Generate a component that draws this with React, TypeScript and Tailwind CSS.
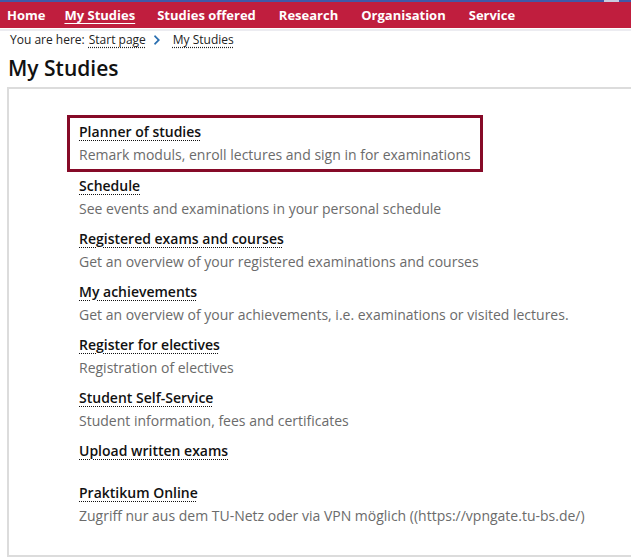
import React from "react";

const items: { title: string; desc?: string }[] = [
  { title: "Schedule", desc: "See events and examinations in your personal schedule" },
  { title: "Registered exams and courses", desc: "Get an overview of your registered examinations and courses" },
  { title: "My achievements", desc: "Get an overview of your achievements, i.e. examinations or visited lectures." },
  { title: "Register for electives", desc: "Registration of electives" },
  { title: "Student Self-Service", desc: "Student information, fees and certificates" },
  { title: "Upload written exams" },
];

const linkCls =
  "font-semibold text-[14px] text-[#111] underline decoration-dotted decoration-[1px] underline-offset-[3px] leading-[23px]";
const descCls = "text-[14px] text-[#6b6b6b] leading-[23px]";

export default function App() {
  return (
    <div className="w-[631px] h-[560px] bg-white overflow-hidden" style={{ fontFamily: '"Open Sans", "Noto Sans", sans-serif' }}>
      <div className="h-[2px] bg-[#4059a8] flex">
        <div className="w-[604px]" />
        <div className="w-[15px] bg-[#c9cde0]" />
      </div>
      <nav className="h-[26px] bg-[#c01e3e] flex items-center pl-[7px] pt-[1px] text-white font-bold text-[13px]">
        <span>Home</span>
        <span className="ml-[19px] underline underline-offset-[3px]">My Studies</span>
        <span className="ml-[22px]">Studies offered</span>
        <span className="ml-[23px]">Research</span>
        <span className="ml-[23px]">Organisation</span>
        <span className="ml-[23px]">Service</span>
      </nav>
      <div className="h-[1px]" />
      <div className="h-[2px] bg-[#ececf1]" />
      <div className="flex items-center pl-[10px] h-[18px] text-[12px] text-[#222]">
        <span>You are here:</span>
        <span className="ml-[4px] underline decoration-dotted underline-offset-[3px]">Start page</span>
        <svg className="ml-[8px]" width="7" height="10" viewBox="0 0 7 10">
          <path d="M1 0 L6 5 L1 10 L0 8.5 L3.5 5 L0 1.5 Z" fill="#2a6fb0" />
        </svg>
        <span className="ml-[12px] underline decoration-dotted underline-offset-[3px]">My Studies</span>
      </div>
      <h1 className="pl-[8px] mt-[4px] text-[21px] font-semibold text-[#111] leading-[30px]">My Studies</h1>
      <div className="ml-[7px] mt-[4px] border-2 border-[#dcdcdc] border-r-0 h-[470px] pt-[26px] pl-[58px]">
        <div className="inline-flex flex-col border-[3px] border-[#860a28] pl-[9px] pr-[9px] pt-[2px] pb-[3px]">
          <span className={linkCls + " self-start"}>Planner of studies</span>
          <span className={descCls}>Remark moduls, enroll lectures and sign in for examinations</span>
        </div>
        <div className="flex flex-col pl-[12px]">
          {items.map((it, i) => (
            <div key={it.title} className={"flex flex-col " + (i === 0 ? "mt-[2px]" : "mt-[7px]")}>
              <span className={linkCls + " self-start"}>{it.title}</span>
              {it.desc ? <span className={descCls}>{it.desc}</span> : <span className="h-[12px]" />}
            </div>
          ))}
          <div className="flex flex-col mt-[7px]">
            <span className={linkCls + " self-start"}>Praktikum Online</span>
            <span className={descCls}>Zugriff nur aus dem TU-Netz oder via VPN möglich ((https://vpngate.tu-bs.de/)</span>
          </div>
        </div>
      </div>
    </div>
  );
}
